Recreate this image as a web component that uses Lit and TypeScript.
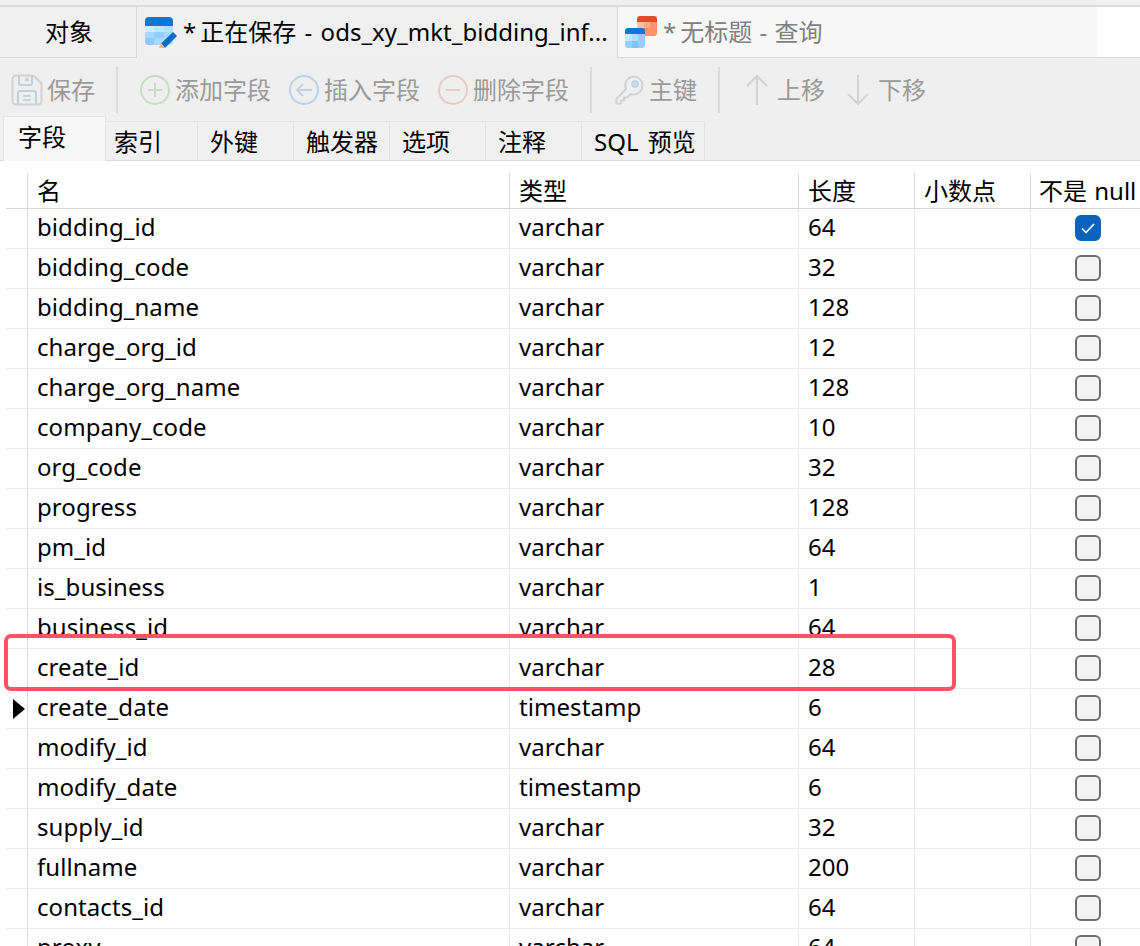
import { LitElement, html, css, svg } from "lit";
import { customElement } from "lit/decorators.js";

const rows: [string, string, string][] = [
  ["bidding_id", "varchar", "64"],
  ["bidding_code", "varchar", "32"],
  ["bidding_name", "varchar", "128"],
  ["charge_org_id", "varchar", "12"],
  ["charge_org_name", "varchar", "128"],
  ["company_code", "varchar", "10"],
  ["org_code", "varchar", "32"],
  ["progress", "varchar", "128"],
  ["pm_id", "varchar", "64"],
  ["is_business", "varchar", "1"],
  ["business_id", "varchar", "64"],
  ["create_id", "varchar", "28"],
  ["create_date", "timestamp", "6"],
  ["modify_id", "varchar", "64"],
  ["modify_date", "timestamp", "6"],
  ["supply_id", "varchar", "32"],
  ["fullname", "varchar", "200"],
  ["contacts_id", "varchar", "64"],
  ["proxy", "varchar", "64"],
];

const tableEdit = html`<svg class="tabicon" width="32" height="32" viewBox="0 0 32 32">
  <path d="M4 0H24a4 4 0 0 1 4 4V9H0V4a4 4 0 0 1 4-4z" fill="#0c78d3"/>
  <path d="M0 9H28V24a4 4 0 0 1-4 4H4a4 4 0 0 1-4-4z" fill="#a9d8ff"/>
  <rect x="0" y="9" width="9" height="6" fill="#d6ecff"/>
  <rect x="9" y="9" width="10" height="6" fill="#c4e4ff"/>
  <rect x="19" y="9" width="9" height="6" fill="#b6deff"/>
  <rect x="9" y="15" width="10" height="6" fill="#94ceff"/>
  <path d="M0 21H9V28H4a4 4 0 0 1-4-4z" fill="#8fcbff"/>
  <path d="M16 26.5 28 15l4 4-12 12z" fill="#0c6cc4"/>
  <path d="M14 31l2-5 4 5z" fill="#e8b98a"/>
</svg>`;

const tableQuery = html`<svg class="tabicon2" width="32" height="32" viewBox="0 0 32 32">
  <path d="M15 0H29a3 3 0 0 1 3 3V6H12V3a3 3 0 0 1 3-3z" fill="#d9502c"/>
  <path d="M12 6H32V17a3 3 0 0 1-3 3H12z" fill="#ff9272"/>
  <rect x="12" y="6" width="7" height="6" fill="#ffc0aa"/>
  <rect x="19" y="6" width="6" height="6" fill="#ffab90"/>
  <path d="M3 12H17a3 3 0 0 1 3 3V18H0V15a3 3 0 0 1 3-3z" fill="#0c78d3"/>
  <path d="M0 18H20V29a3 3 0 0 1-3 3H3a3 3 0 0 1-3-3z" fill="#94ceff"/>
  <rect x="0" y="18" width="7" height="7" fill="#cbe7ff"/>
  <rect x="7" y="18" width="6" height="7" fill="#b4dcff"/>
  <rect x="7" y="25" width="6" height="7" fill="#7fc2fb"/>
</svg>`;

const iconSave = svg`<path d="M5 1.5H22.5L30.5 9.5V27a3.5 3.5 0 0 1-3.5 3.5H5A3.5 3.5 0 0 1 1.5 27V5A3.5 3.5 0 0 1 5 1.5z" fill="none" stroke="#d2d2d2" stroke-width="2"/>
  <path d="M8 2V9a2 2 0 0 0 2 2H19a2 2 0 0 0 2-2V2" fill="none" stroke="#bcd2e4" stroke-width="2"/>
  <rect x="14.5" y="3.5" width="3" height="4" fill="#bcd2e4"/>
  <path d="M7 30V19a2 2 0 0 1 2-2H23a2 2 0 0 1 2 2V30" fill="none" stroke="#bcd2e4" stroke-width="2"/>
  <path d="M12 22H20M12 26H20" stroke="#c9c9c9" stroke-width="1.6"/>`;
const iconAdd = svg`<circle cx="16" cy="16" r="14" fill="none" stroke="#c8dcc2" stroke-width="2"/><path d="M16 9V23M9 16H23" stroke="#c8dcc2" stroke-width="2"/>`;
const iconInsert = svg`<circle cx="16" cy="16" r="14" fill="none" stroke="#bcd2e4" stroke-width="2"/><path d="M24 16H9M15 10L9 16L15 22" fill="none" stroke="#bcd2e4" stroke-width="2"/>`;
const iconDelete = svg`<circle cx="16" cy="16" r="14" fill="none" stroke="#e8c9c5" stroke-width="2"/><path d="M9 16H23" stroke="#e8c9c5" stroke-width="2"/>`;
const iconKey = svg`<path d="M20.5 2.5a9 9 0 0 1 0 18 9 9 0 0 1-3-.5L14 23.5H11V26.5H8V29.5H3.5V25L13 15a9 9 0 0 1 7.5-12.5z" fill="none" stroke="#d2d2d2" stroke-width="2" stroke-linejoin="round"/><circle cx="22" cy="10" r="3" fill="#c9dcea" stroke="#bcd2e4" stroke-width="1.5"/>`;
const iconUp = svg`<path d="M16 31V2M6 12L16 2L26 12" fill="none" stroke="#d2d2d2" stroke-width="2"/>`;
const iconDown = svg`<path d="M16 1V30M6 20L16 30L26 20" fill="none" stroke="#d2d2d2" stroke-width="2"/>`;

const tools: ([any, string] | null)[] = [
  [iconSave, "保存"],
  null,
  [iconAdd, "添加字段"],
  [iconInsert, "插入字段"],
  [iconDelete, "删除字段"],
  null,
  [iconKey, "主键"],
  null,
  [iconUp, "上移"],
  [iconDown, "下移"],
];

const subTabs = ["字段", "索引", "外键", "触发器", "选项", "注释", "SQL 预览"];

@customElement("app-root")
export class AppRoot extends LitElement {
  static styles = css`
    :host {
      display: block;
      width: 1140px;
      height: 946px;
      overflow: hidden;
      background: #fff;
      position: relative;
      font-family: "Noto Sans", "Noto Sans CJK SC", sans-serif;
      font-size: 24px;
      color: #000;
    }
    .strip {
      height: 5px;
      background: #f0f0f0;
      border-bottom: 2px solid #dcdcdc;
    }
    .tabs {
      display: grid;
      grid-template-columns: 137px 480px 480px 1fr;
      height: 51px;
    }
    .tab {
      display: flex;
      align-items: center;
      box-sizing: border-box;
      height: 51px;
      white-space: nowrap;
      overflow: hidden;
      border-bottom: 1px solid #d9d9d9;
      line-height: 50px;
      padding-bottom: 1px;
      letter-spacing: 0.02px;
    }
    .t-obj {
      background: #f0f0f0;
      border-right: 1px solid #d9d9d9;
      padding-left: 45px;
    }
    .t-active {
      background: #f0f0f0;
      border-bottom: none;
      padding-left: 8px;
      gap: 6px;
    }
    .t-query {
      background: #f7f7f7;
      border-left: 1px solid #d9d9d9;
      color: #808080;
      padding-left: 7px;
      gap: 6px;
    }
    .t-rest { background: #fff; }
    .star { margin-right: 4px; }
    .dash-a { margin: 0 2px; }
    .dash-q { margin: 0 1px; }
    .tabicon { flex: none; margin-top: 2px; margin-left: 0; }
    .tabicon2 { flex: none; margin-top: 1px; }
    .toolbar {
      display: flex;
      align-items: center;
      height: 58px;
      background: #efefef;
      box-sizing: border-box;
      padding-left: 11px;
      padding-top: 6px;
      color: #9a9a9a;
    }
    .tool {
      display: flex;
      align-items: center;
      gap: 4px;
      margin-right: 17px;
      height: 34px;
      line-height: 36px;
    }
    .tool svg { flex: none; }
    .sep {
      width: 2px;
      height: 46px;
      background: #dcdcdc;
      margin-left: 4px;
      margin-right: 21px;
    }
    .subtabs {
      display: grid;
      grid-template-columns: 103px 92px 96px 96px 96px 96px 123px;
      align-items: end;
      height: 45px;
      box-sizing: border-box;
      background: #efefef;
      padding-left: 3px;
      position: relative;
    }
    .subtabs::after {
      content: "";
      position: absolute;
      left: 0;
      right: 0;
      bottom: 0;
      height: 1px;
      background: #dcdcdc;
    }
    .st {
      height: 40px;
      box-sizing: border-box;
      border-top: 1px solid #e6e6e6;
      border-right: 1px solid #e3e3e3;
      background: #f0f0f0;
      padding-left: 12px;
      line-height: 39px;
      white-space: nowrap;
      word-spacing: 3px;
    }
    .st.second { padding-left: 8px; }
    .st.on {
      position: relative;
      z-index: 1;
      height: 45px;
      background: #f7f7f7;
      border: 1px solid #e3e3e3;
      border-bottom: none;
      padding-left: 14px;
      line-height: 40px;
    }
    .table {
      background: #fff;
      margin-left: 6px;
    }
    .head, .row {
      display: grid;
      grid-template-columns: 22px 482px 289px 116px 116px 109px;
    }
    .head {
      height: 48px;
      align-items: end;
    }
    .hc {
      height: 36px;
      box-sizing: border-box;
      line-height: 36px;
      border-right: 1px solid #dcdcdc;
      border-bottom: 1px solid #d6d6d6;
      padding-left: 9px;
      white-space: nowrap;
      overflow: hidden;
      word-spacing: 1px;
    }
    .hc.g { padding-left: 0; }
    .hc.last { border-right: none; padding-left: 8px; }
    .row { height: 40px; }
    .c {
      box-sizing: border-box;
      height: 40px;
      border-bottom: 1px solid #ebebeb;
      border-right: 1px solid #ebebeb;
      padding-left: 9px;
      line-height: 36px;
      white-space: nowrap;
      letter-spacing: 0.07px;
    }
    .c.g {
      padding: 0;
      border-right-color: #d9d9d9;
      display: flex;
      align-items: center;
      justify-content: flex-end;
      padding-right: 2px;
    }
    .c.last {
      border-right: none;
      display: flex;
      align-items: center;
      padding-left: 44px;
      padding-bottom: 1px;
    }
    .arrow {
      width: 0;
      height: 0;
      border-left: 12px solid #000;
      border-top: 10px solid transparent;
      border-bottom: 10px solid transparent;
    }
    .cb {
      width: 26px;
      height: 26px;
      box-sizing: border-box;
      border: 2px solid #6e6e6e;
      border-radius: 6px;
      background: #f3f3f3;
    }
    .cb.on {
      background: #0b62bd;
      border-color: #0b62bd;
      display: flex;
      align-items: center;
      justify-content: center;
    }
    .mark {
      position: absolute;
      left: 4px;
      top: 634px;
      width: 952px;
      height: 57px;
      box-sizing: border-box;
      border: 4px solid #fd5266;
      border-radius: 7px;
      pointer-events: none;
    }
  `;

  render() {
    return html`
      <div class="strip"></div>
      <div class="tabs">
        <div class="tab t-obj">对象</div>
        <div class="tab t-active">${tableEdit}<span><span class="star">*</span>正在保存 <span class="dash-a">-</span> ods_xy_mkt_bidding_inf...</span></div>
        <div class="tab t-query">${tableQuery}<span><span class="star">*</span>无标题 <span class="dash-q">-</span> 查询</span></div>
        <div class="tab t-rest"></div>
      </div>
      <div class="toolbar">
        ${tools.map((t) =>
          t
            ? html`<div class="tool"><svg width="32" height="32" viewBox="0 0 32 32">${t[0]}</svg><span>${t[1]}</span></div>`
            : html`<div class="sep"></div>`
        )}
      </div>
      <div class="subtabs">
        ${subTabs.map(
          (s, i) => html`<div class="st ${i === 0 ? "on" : i === 1 ? "second" : ""}">${s}</div>`
        )}
      </div>
      <div class="table">
        <div class="head">
          <div class="hc g"></div>
          <div class="hc">名</div>
          <div class="hc">类型</div>
          <div class="hc">长度</div>
          <div class="hc">小数点</div>
          <div class="hc last">不是 null</div>
        </div>
        ${rows.map(
          (r, i) => html`<div class="row">
            <div class="c g">${r[0] === "create_date" ? html`<span class="arrow"></span>` : ""}</div>
            <div class="c">${r[0]}</div>
            <div class="c">${r[1]}</div>
            <div class="c">${r[2]}</div>
            <div class="c"></div>
            <div class="c last">
              ${i === 0
                ? html`<span class="cb on"><svg width="16" height="12" viewBox="0 0 16 12"><path d="M2 6.5L6 10.5L14 2" fill="none" stroke="#fff" stroke-width="1.6"/></svg></span>`
                : html`<span class="cb"></span>`}
            </div>
          </div>`
        )}
      </div>
      <div class="mark"></div>
    `;
  }
}
